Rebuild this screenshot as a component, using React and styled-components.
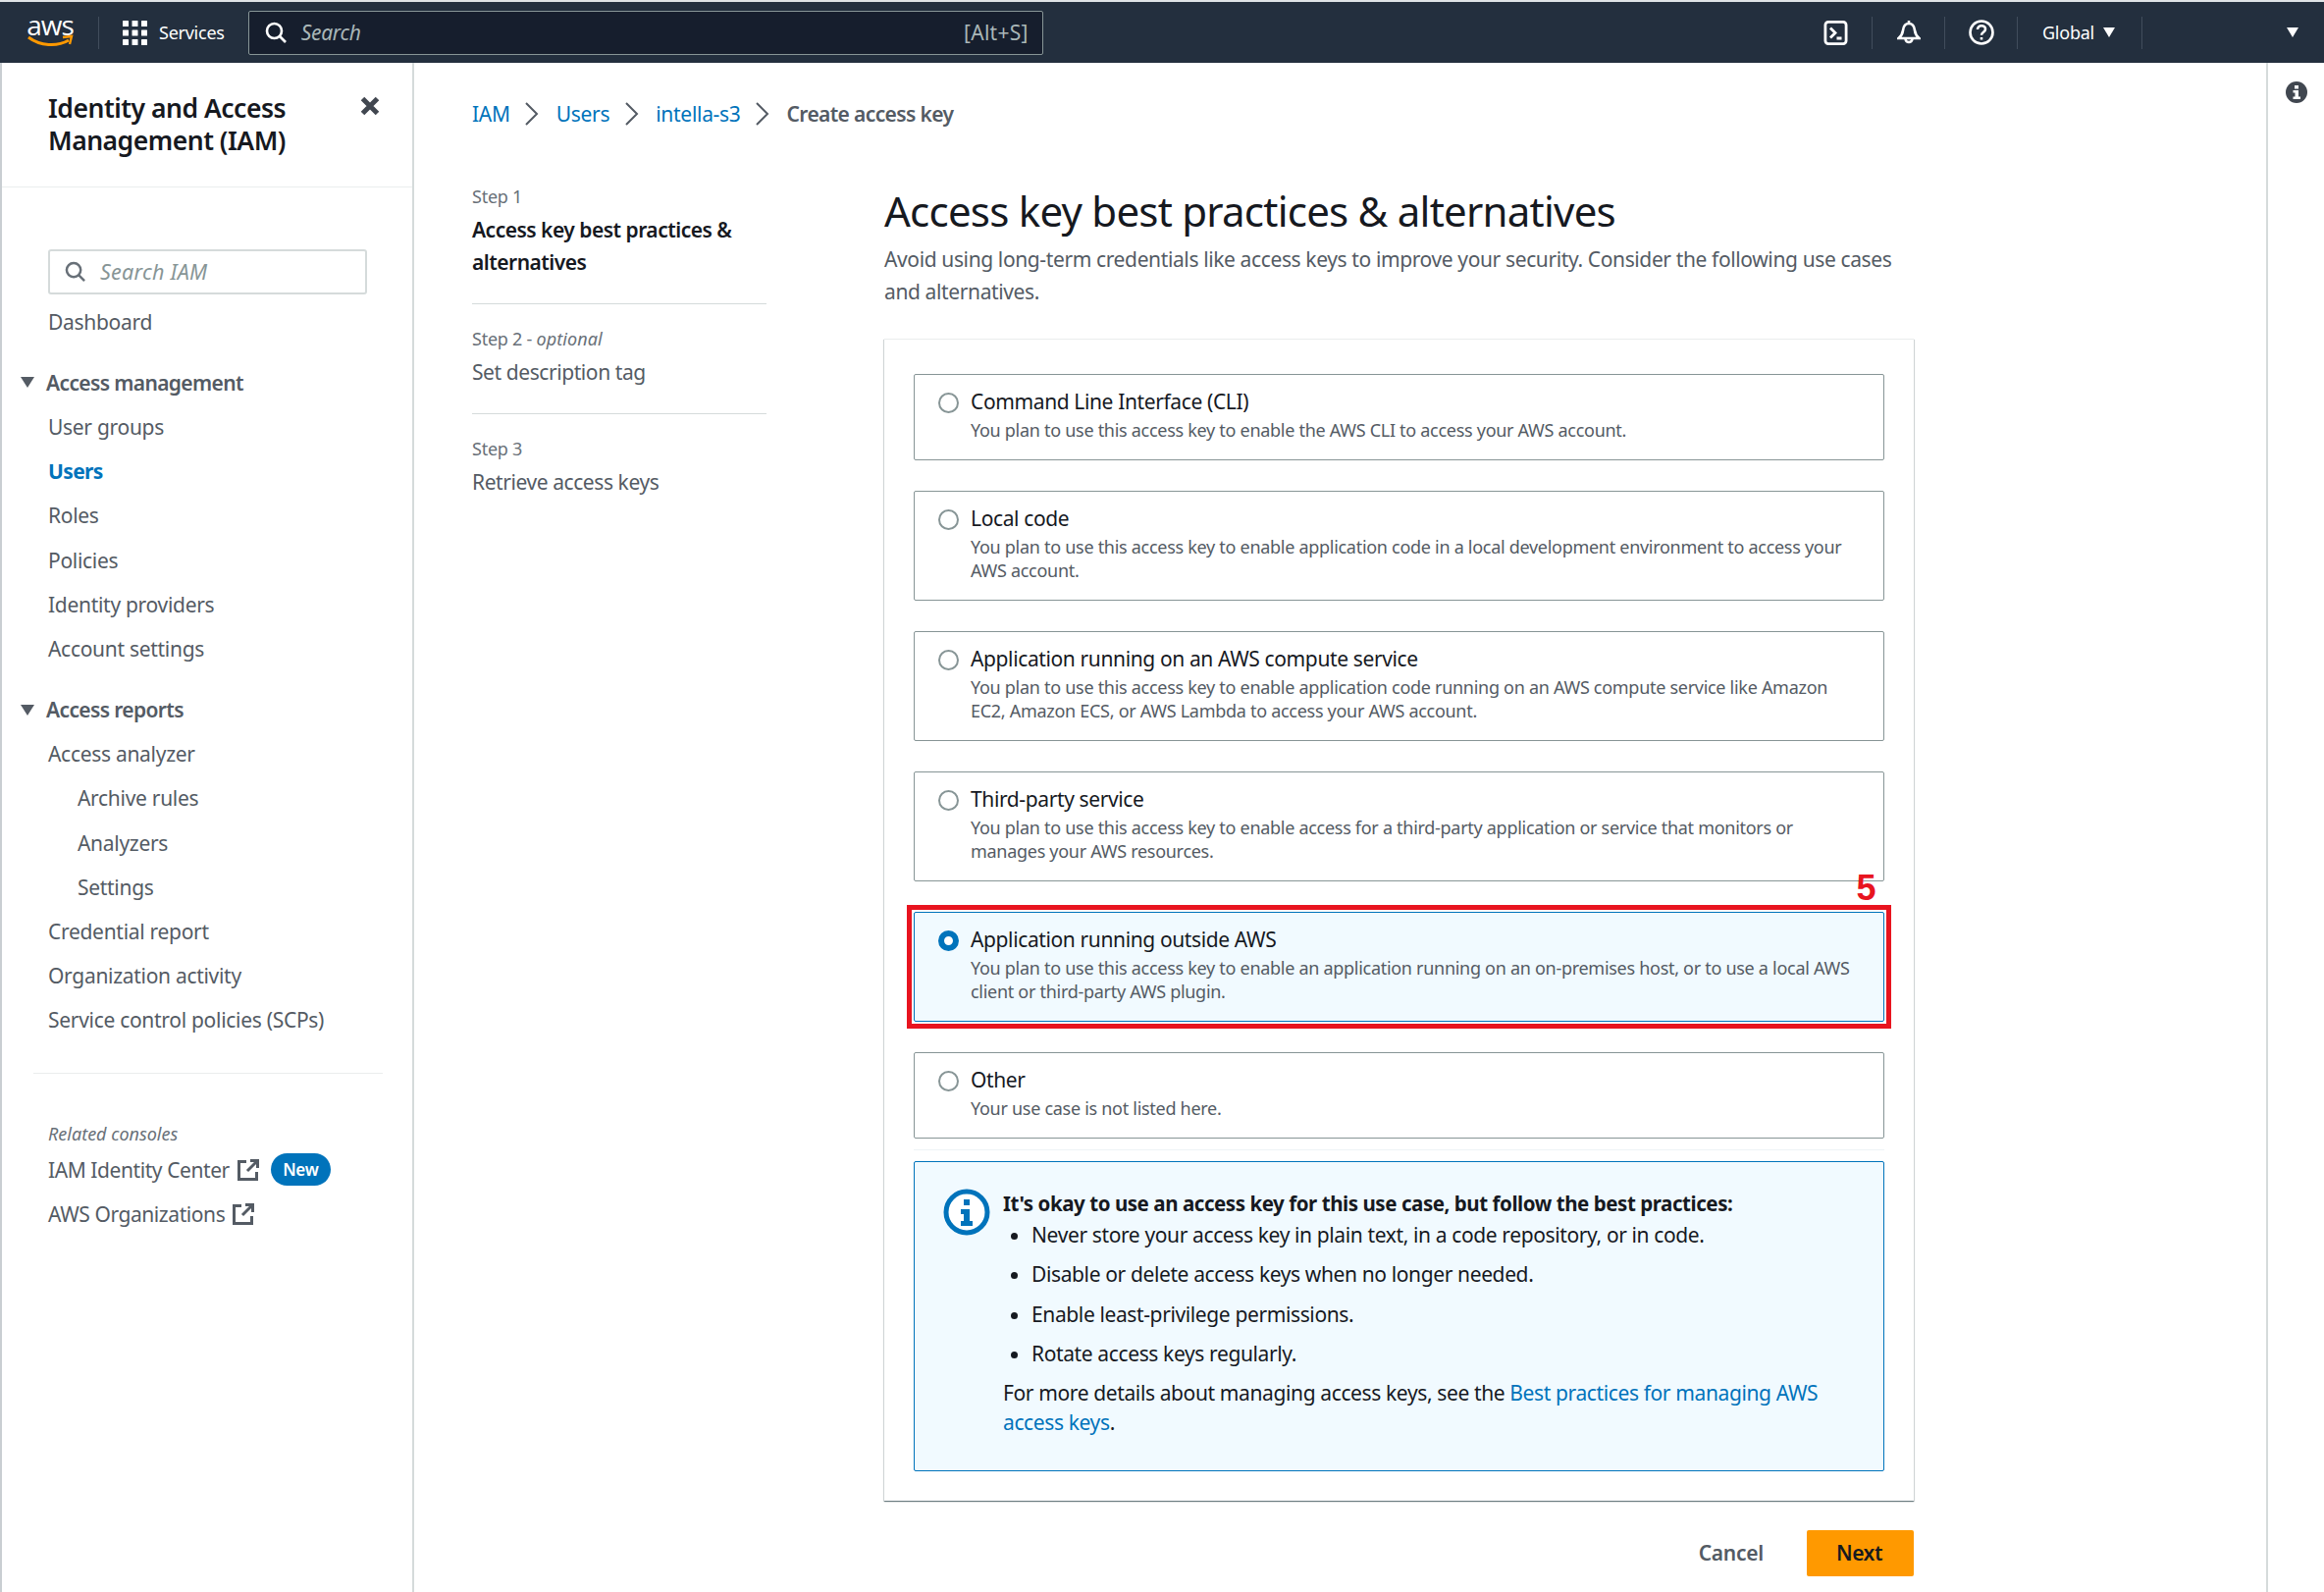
import React from "react";
import styled, { createGlobalStyle } from "styled-components";

const GlobalStyle = createGlobalStyle`
  html, body { margin: 0; padding: 0; background: #fff; }
  body { font-family: "Noto Sans", "Open Sans", Arial, sans-serif; color: #16191f; }
  * { box-sizing: border-box; letter-spacing: -0.014em; }
`;

const Page = styled.div`
  width: 2368px;
  height: 1622px;
  overflow: hidden;
  display: flex;
  flex-direction: column;
  border-top: 2px solid #dfe3e6;
`;

/* top bar */
const TopBar = styled.header`
  height: 62px;
  flex: none;
  background: #232f3e;
  display: flex;
  align-items: center;
  color: #fff;
  padding-left: 27px;
`;
const Logo = styled.div`
  width: 48px;
  height: 46px;
  position: relative;
  font: 500 28px/30px "Open Sans", sans-serif;
  letter-spacing: -1px;
  text-align: center;
  svg { position: absolute; left: 0; top: 25px; }
`;
const BarSep = styled.div`
  width: 1px;
  height: 33px;
  background: #414d5c;
  flex: none;
  margin-left: ${p => p.$left || 0}px;
`;
const ServicesBtn = styled.div`
  display: flex;
  align-items: center;
  gap: 12px;
  font-size: 18px;
  margin: 0 24px 0 24px;
`;
const SearchBar = styled.div`
  width: 810px;
  height: 45px;
  background: #161e2d;
  border: 1px solid #879596;
  border-radius: 2px;
  display: flex;
  align-items: center;
  padding: 0 14px 0 16px;
  gap: 15px;
  color: #aab7b8;
  font-size: 21px;
  em { flex: 1; }
  span { letter-spacing: 0.012em; }
`;
const BarRight = styled.div`
  margin-left: auto;
  display: flex;
  align-items: center;
  height: 100%;
`;
const BarIcon = styled.div`
  width: 73px;
  display: flex;
  justify-content: center;
`;
const Region = styled.div`
  width: 126px;
  display: flex;
  align-items: center;
  gap: 9px;
  font-size: 18px;
  padding-left: 25px;
`;
const Caret = styled.span`
  width: 0;
  height: 0;
  border-left: ${p => p.$size || 6.5}px solid transparent;
  border-right: ${p => p.$size || 6.5}px solid transparent;
  border-top: ${p => (p.$size ? 11 : 10)}px solid ${p => p.$color || "#fff"};
  flex: none;
`;
const AccountBox = styled.div`
  width: 185px;
  display: flex;
  justify-content: flex-end;
  padding-right: 26px;
`;

/* body */
const Body = styled.div`
  flex: 1;
  display: flex;
  min-height: 0;
`;
const Sidebar = styled.aside`
  width: 422px;
  flex: none;
  border-left: 2px solid #c9ced2;
  border-right: 2px solid #d5dbdb;
  display: flex;
  flex-direction: column;
`;
const SideHead = styled.div`
  height: 127px;
  flex: none;
  border-bottom: 1px solid #eaeded;
  padding: 30px 33px 0 47px;
  display: flex;
  justify-content: space-between;
  align-items: flex-start;
  h2 {
    margin: 0;
    font-size: 26.5px;
    line-height: 33px;
    font-weight: 600;
    color: #16191f;
    letter-spacing: -0.018em;
  }
  svg { margin-top: 4px; }
`;
const SideBody = styled.div`
  padding: 63px 0 0 47px;
`;
const SideSearch = styled.div`
  width: 325px;
  height: 46px;
  border: 2px solid #d5dbdb;
  border-radius: 3px;
  display: flex;
  align-items: center;
  gap: 15px;
  padding: 0 0 2px 15px;
  font-size: 21.5px;
  letter-spacing: 0.012em;
  color: #879596;
  font-style: italic;
  margin-bottom: 5px;
`;
const NavRow = styled.div`
  height: 45.2px;
  display: flex;
  align-items: center;
  font-size: 21px;
  padding-left: ${p => (p.$sub ? 30 : 0)}px;
  color: ${p => (p.$active ? "#0073bb" : "#545b64")};
  font-weight: ${p => (p.$active ? 700 : 400)};
  letter-spacing: ${p => (p.$active ? "-0.03em" : "-0.014em")};
`;
const NavHead = styled.div`
  height: 45.2px;
  margin: 17px 0 0 -28px;
  display: flex;
  align-items: center;
  gap: 12px;
  font-size: 21px;
  font-weight: 600;
  color: #545b64;
  letter-spacing: -0.03em;
`;
const SideRule = styled.div`
  height: 1px;
  background: #eaeded;
  margin: 31px 30px 0 -15px;
`;
const Related = styled.div`
  margin-top: 49px;
  font-size: 18px;
  font-style: italic;
  color: #687078;
  line-height: 24px;
  letter-spacing: 0;
`;
const RelatedLink = styled.div`
  height: 45px;
  display: flex;
  align-items: center;
  gap: 8px;
  font-size: 21px;
  color: #545b64;
  letter-spacing: -0.02em;
  margin-top: ${p => (p.$first ? 2 : 0)}px;
`;
const NewBadge = styled.span`
  background: #0073bb;
  color: #fff;
  font-size: 17px;
  font-weight: 600;
  height: 33px;
  width: 61px;
  border-radius: 17px;
  display: flex;
  align-items: center;
  justify-content: center;
  margin-left: 4px;
`;

/* main */
const Main = styled.main`
  flex: 1;
  padding: 0 0 0 59px;
  min-width: 0;
`;
const Crumbs = styled.nav`
  height: 30px;
  margin-top: 37px;
  display: flex;
  align-items: center;
  font-size: 21px;
  a { color: #0073bb; letter-spacing: -0.014em; }
  b { color: #545b64; font-weight: 600; letter-spacing: -0.03em; }
  svg { margin: 0 17.5px 0 14.5px; }
`;
const Columns = styled.div`
  display: flex;
  margin-top: 42px;
`;
const Steps = styled.ol`
  width: 300px;
  flex: none;
  margin: 0 120px 0 0;
  padding: 15px 0 0;
  list-style: none;
`;
const Step = styled.li`
  padding-bottom: 25px;
  margin-bottom: 23px;
  border-bottom: ${p => (p.$last ? "none" : "1px solid #d5dbdb")};
  small {
    display: block;
    font-size: 18px;
    line-height: 24px;
    color: #687078;
    margin-bottom: 6px;
  }
  i { letter-spacing: 0.005em; }
  span {
    display: block;
    font-size: 21px;
    line-height: 33px;
    font-weight: ${p => (p.$current ? 600 : 400)};
    letter-spacing: ${p => (p.$current ? "-0.024em" : "-0.02em")};
    color: ${p => (p.$current ? "#16191f" : "#545b64")};
  }
`;
const Content = styled.section`
  width: 1049px;
  flex: none;
  padding-top: 15px;
`;
const Title = styled.h1`
  margin: 0;
  font-size: 42px;
  line-height: 54px;
  font-weight: 400;
  color: #16191f;
  letter-spacing: -0.018em;
`;
const Lead = styled.p`
  margin: 6px 0 0;
  font-size: 21px;
  line-height: 33px;
  color: #545b64;
  letter-spacing: -0.018em;
`;
const Card = styled.div`
  margin-top: 31px;
  padding: 35px 30px 30px;
  background: #fff;
  box-shadow: 0 1px 1px 0 rgba(0, 28, 36, 0.45), 1px 1px 1px 0 rgba(0, 28, 36, 0.12), -1px 1px 1px 0 rgba(0, 28, 36, 0.12);
  border-top: 1px solid #eaeded;
`;
const Option = styled.div`
  position: relative;
  display: flex;
  gap: 12px;
  padding: 12px 20px 18px 24px;
  border: 1.5px solid ${p => (p.$selected ? "#0073bb" : "#879596")};
  border-radius: 2px;
  background: ${p => (p.$selected ? "#f1faff" : "#fff")};
  margin-bottom: 31px;
  ${p => p.$selected && `
    &::after {
      content: "";
      position: absolute;
      inset: -8px;
      border: 5px solid #e8141f;
      pointer-events: none;
    }
  `}
`;
const Radio = styled.span`
  width: 21px;
  height: 21px;
  flex: none;
  margin-top: 6px;
  border-radius: 50%;
  border: ${p => (p.$on ? "6px solid #0073bb" : "2px solid #879596")};
  background: #fff;
`;
const OptionTitle = styled.div`
  font-size: 21px;
  line-height: 30px;
  color: #16191f;
  margin-bottom: 2px;
  letter-spacing: -0.018em;
`;
const OptionDesc = styled.div`
  font-size: 18px;
  line-height: 24px;
  color: #545b64;
  letter-spacing: -0.016em;
`;
const StepMark = styled.span`
  position: absolute;
  right: 8px;
  top: -44px;
  z-index: 1;
  font: 700 36px/38px "Liberation Sans", Arial, sans-serif;
  color: #e8141f;
`;
const FaintRule = styled.div`
  height: 1px;
  background: #eef3f6;
  margin: -20px 0 11px;
`;
const InfoBox = styled.div`
  display: flex;
  height: 316px;
  padding: 27px 30px 0 29px;
  border: 1.5px solid #0073bb;
  border-radius: 2px;
  background: #f1faff;
  font-size: 21px;
  color: #16191f;
  gap: 13px;
  svg { flex: none; }
  a { color: #0073bb; letter-spacing: -0.018em; }
`;
const InfoTitle = styled.div`
  font-weight: 700;
  line-height: 30px;
  font-size: 20.5px;
  letter-spacing: -0.0215em;
`;
const InfoList = styled.ul`
  margin: 2px 0 0;
  padding: 0 0 0 29px;
  li { height: 40.4px; line-height: 30px; letter-spacing: -0.018em; }
`;
const InfoFoot = styled.div`
  line-height: 30px;
  margin-top: -1px;
  letter-spacing: -0.018em;
`;
const Actions = styled.div`
  margin-top: 30px;
  display: flex;
  justify-content: flex-end;
  align-items: center;
  gap: 44px;
`;
const CancelBtn = styled.span`
  font-size: 21px;
  font-weight: 600;
  color: #545b64;
  letter-spacing: -0.012em;
  padding-bottom: 2px;
`;
const NextBtn = styled.span`
  width: 109px;
  height: 47px;
  padding: 0 2px 2px 0;
  background: #ff9900;
  border-radius: 2px;
  display: flex;
  align-items: center;
  justify-content: center;
  font-size: 21px;
  font-weight: 600;
  color: #16191f;
  letter-spacing: -0.02em;
`;
const Rail = styled.aside`
  width: 59px;
  flex: none;
  border-left: 2px solid #d5dbdb;
  display: flex;
  justify-content: center;
  padding-top: 19px;
`;

const SearchIcon = ({ color = "#fff", size = 22 }) => (
  <svg width={size} height={size} viewBox="0 0 22 22" fill="none" stroke={color} strokeWidth="2.6">
    <circle cx="9.5" cy="9.5" r="7.5" />
    <path d="M15 15l6 6" />
  </svg>
);

const GridIcon = () => (
  <svg width="25" height="25" viewBox="0 0 25 25" fill="#fff">
    {[0, 9.5, 19].map(y =>
      [0, 9.5, 19].map(x => <rect key={`${x}-${y}`} x={x} y={y} width="6" height="6" rx="0.5" />)
    )}
  </svg>
);

const ExternalIcon = () => (
  <svg width="22" height="22" viewBox="0 0 22 22" fill="none" stroke="#545b64" strokeWidth="3">
    <path d="M9 2.5H1.5v18h18V13" />
    <path d="M10 12L20 2M13 1.5h7.5V9" />
  </svg>
);

const Chevron = () => (
  <svg width="15" height="24" viewBox="0 0 15 24" fill="none" stroke="#545b64" strokeWidth="2">
    <path d="M2 1l11 11L2 23" />
  </svg>
);

const TriDown = () => <Caret $color="#545b64" $size={7.5} />;

const navTop = ["User groups", "Users", "Roles", "Policies", "Identity providers", "Account settings"];
const navReports = [
  { t: "Access analyzer" },
  { t: "Archive rules", sub: true },
  { t: "Analyzers", sub: true },
  { t: "Settings", sub: true },
  { t: "Credential report" },
  { t: "Organization activity" },
  { t: "Service control policies (SCPs)" },
];

const options = [
  { t: "Command Line Interface (CLI)", d: "You plan to use this access key to enable the AWS CLI to access your AWS account." },
  { t: "Local code", d: <>You plan to use this access key to enable application code in a local development environment to access your<br />AWS account.</> },
  { t: "Application running on an AWS compute service", d: <>You plan to use this access key to enable application code running on an AWS compute service like Amazon<br />EC2, Amazon ECS, or AWS Lambda to access your AWS account.</> },
  { t: "Third-party service", d: <>You plan to use this access key to enable access for a third-party application or service that monitors or<br />manages your AWS resources.</> },
  { t: "Application running outside AWS", d: <>You plan to use this access key to enable an application running on an on-premises host, or to use a local AWS<br />client or third-party AWS plugin.</>, on: true },
  { t: "Other", d: "Your use case is not listed here." },
];

export default function App() {
  return (
    <Page>
      <GlobalStyle />
      <TopBar>
        <Logo>
          aws
          <svg width="48" height="18" viewBox="0 0 48 18" fill="none">
            <path d="M2 3c12 9 29 10 41 3" stroke="#ff9900" strokeWidth="3" />
            <path d="M37 3l9-1-2 8" stroke="#ff9900" strokeWidth="2.4" />
          </svg>
        </Logo>
        <BarSep $left={25} />
        <ServicesBtn><GridIcon />Services</ServicesBtn>
        <SearchBar>
          <SearchIcon />
          <em>Search</em>
          <span>[Alt+S]</span>
        </SearchBar>
        <BarRight>
          <BarIcon>
            <svg width="25" height="25" viewBox="0 0 24 25" fill="none" stroke="#fff" strokeWidth="2.8">
              <rect x="1.4" y="1.4" width="21.2" height="22.2" rx="3" />
              <path d="M6.5 7.500l5 5-5 5M13 18h5" />
            </svg>
          </BarIcon>
          <BarSep />
          <BarIcon>
            <svg width="24" height="26" viewBox="0 0 24 26" fill="none" stroke="#fff" strokeWidth="2.6">
              <path d="M12 1v3M1.500 19h21c-3-2.500-4-4-4.500-8-.5-4.500-3-7-6-7s-5.500 2.500-6 7c-.5 4-1.500 5.500-4.500 8z" />
              <path d="M8.500 19.500a3.500 3.500 0 0 0 7 0" />
            </svg>
          </BarIcon>
          <BarSep />
          <BarIcon>
            <svg width="26" height="26" viewBox="0 0 26 26" fill="none" stroke="#fff" strokeWidth="2.6">
              <circle cx="13" cy="13" r="11.500" />
              <path d="M9 10c0-2.500 2-3.800 4-3.800s4 1.300 4 3.500c0 3-4 3-4 6" />
              <path d="M13 18v2.500" />
            </svg>
          </BarIcon>
          <BarSep />
          <Region>Global <Caret /></Region>
          <BarSep />
          <AccountBox><Caret /></AccountBox>
        </BarRight>
      </TopBar>
      <Body>
        <Sidebar>
          <SideHead>
            <h2>Identity and Access<br />Management (IAM)</h2>
            <svg width="20" height="20" viewBox="0 0 20 20" fill="none" stroke="#414750" strokeWidth="5">
              <path d="M2.500 2.500l15 15M17.500 2.500l-15 15" />
            </svg>
          </SideHead>
          <SideBody>
            <SideSearch><SearchIcon color="#687078" size={21} />Search IAM</SideSearch>
            <NavRow>Dashboard</NavRow>
            <NavHead><TriDown />Access management</NavHead>
            {navTop.map(t => <NavRow key={t} $active={t === "Users"}>{t}</NavRow>)}
            <NavHead><TriDown />Access reports</NavHead>
            {navReports.map(n => <NavRow key={n.t} $sub={n.sub}>{n.t}</NavRow>)}
            <SideRule />
            <Related>Related consoles</Related>
            <RelatedLink $first>IAM Identity Center <ExternalIcon /><NewBadge>New</NewBadge></RelatedLink>
            <RelatedLink>AWS Organizations <ExternalIcon /></RelatedLink>
          </SideBody>
        </Sidebar>
        <Main>
          <Crumbs>
            <a>IAM</a><Chevron /><a>Users</a><Chevron /><a>intella-s3</a><Chevron /><b>Create access key</b>
          </Crumbs>
          <Columns>
            <Steps>
              <Step $current><small>Step 1</small><span>Access key best practices &amp; alternatives</span></Step>
              <Step><small>Step 2 - <i>optional</i></small><span>Set description tag</span></Step>
              <Step $last><small>Step 3</small><span>Retrieve access keys</span></Step>
            </Steps>
            <Content>
              <Title>Access key best practices &amp; alternatives</Title>
              <Lead>Avoid using long-term credentials like access keys to improve your security. Consider the following use cases and alternatives.</Lead>
              <Card>
                {options.map(o => (
                  <Option key={o.t} $selected={o.on}>
                    <Radio $on={o.on} />
                    <div>
                      <OptionTitle>{o.t}</OptionTitle>
                      <OptionDesc>{o.d}</OptionDesc>
                    </div>
                    {o.on && <StepMark>5</StepMark>}
                  </Option>
                ))}
                <FaintRule />
                <InfoBox>
                  <svg width="48" height="48" viewBox="0 0 48 48">
                    <circle cx="24" cy="24" r="21" fill="#fff" stroke="#0073bb" strokeWidth="5" />
                    <rect x="21" y="11" width="6" height="6" fill="#0073bb" />
                    <path d="M18 21h9v12h3v5H18v-5h3v-7h-3z" fill="#0073bb" />
                  </svg>
                  <div>
                    <InfoTitle>It's okay to use an access key for this use case, but follow the best practices:</InfoTitle>
                    <InfoList>
                      <li>Never store your access key in plain text, in a code repository, or in code.</li>
                      <li>Disable or delete access keys when no longer needed.</li>
                      <li>Enable least-privilege permissions.</li>
                      <li>Rotate access keys regularly.</li>
                    </InfoList>
                    <InfoFoot>For more details about managing access keys, see the <a>Best practices for managing AWS access keys</a>.</InfoFoot>
                  </div>
                </InfoBox>
              </Card>
              <Actions>
                <CancelBtn>Cancel</CancelBtn>
                <NextBtn>Next</NextBtn>
              </Actions>
            </Content>
          </Columns>
        </Main>
        <Rail>
          <svg width="22" height="22" viewBox="0 0 22 22">
            <circle cx="11" cy="11" r="11" fill="#414750" />
            <rect x="9" y="4" width="4" height="3.500" fill="#fff" />
            <path d="M7.500 9H13v6.500h2V18H7.500v-2.500h2V11.500h-2z" fill="#fff" />
          </svg>
        </Rail>
      </Body>
    </Page>
  );
}
